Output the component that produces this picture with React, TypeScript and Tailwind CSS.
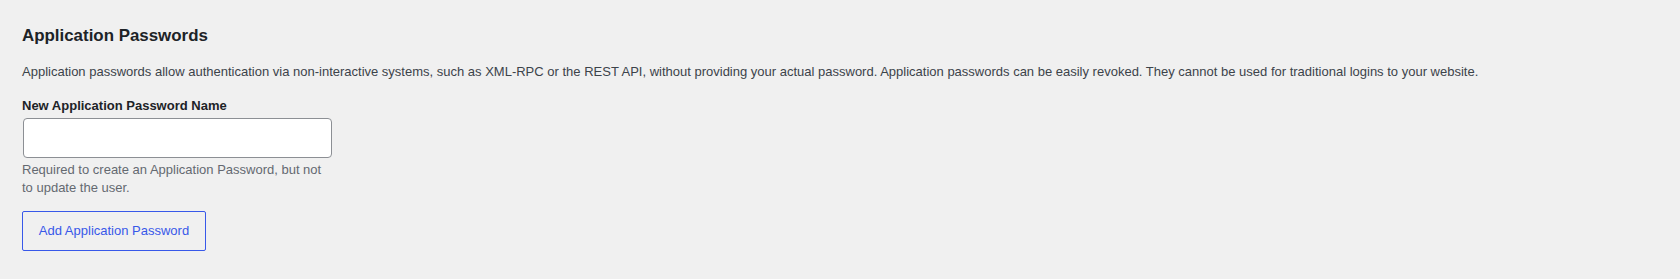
import React from 'react'

export default function App() {
  return (
    <div className="min-h-[279px] w-full bg-[#f0f0f0] px-[22px] pt-[24px] font-['Liberation_Sans',Arial,sans-serif] text-[#3c434a]">
      <h2 className="text-[16.9px] font-bold leading-[24px] text-[#1d2327]">Application Passwords</h2>
      <p className="mt-[14px] text-[13px] leading-[20px] text-[#3c434a]">
        Application passwords allow authentication via non-interactive systems, such as XML-RPC or the REST API, without providing your actual password. Application passwords can be easily revoked. They cannot be used for traditional logins to your website.
      </p>
      <div className="mt-[15px] w-[310px]">
        <label htmlFor="new-app-pass" className="block text-[13px] font-bold leading-[18px] text-[#1d2327]">
          New Application Password Name
        </label>
        <input
          id="new-app-pass"
          type="text"
          className="mt-[3px] ml-px block h-[40px] w-[309px] rounded-[4px] border border-[#8c8f94] bg-white px-2 text-[13px] outline-none"
        />
        <p className="mt-[3px] text-[13px] leading-[18px] text-[#646970]">
          Required to create an Application Password, but not to update the user.
        </p>
      </div>
      <button
        type="button"
        className="mt-[14px] h-[40px] w-[184px] rounded-[2px] border border-[#3858e9] bg-transparent text-[13px] leading-[20px] text-[#3858e9]"
      >
        Add Application Password
      </button>
    </div>
  )
}
